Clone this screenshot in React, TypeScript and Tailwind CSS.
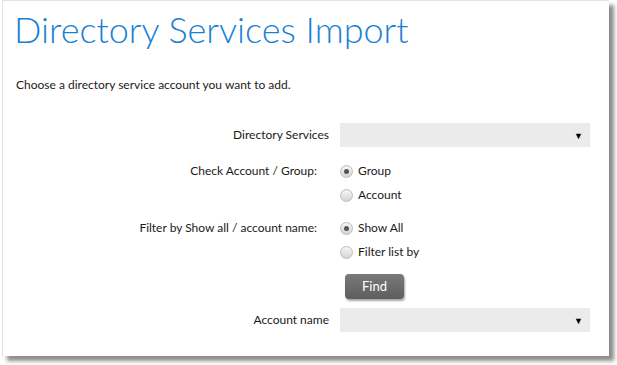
import React from 'react';

// Simple radio bullet, drawn with CSS
const Radio: React.FC<{ checked?: boolean; label: string }> = ({ checked, label }) => (
  <label className="flex h-[24px] items-center gap-[5px]">
    <span className="flex h-[13px] w-[13px] items-center justify-center rounded-full border border-[#bdbdbd] bg-gradient-to-b from-[#f6f6f6] to-[#d4d4d4]">
      {checked && <span className="h-[5px] w-[5px] rounded-full bg-[#555555]" />}
    </span>
    <span>{label}</span>
  </label>
);

const Select: React.FC = () => (
  <div className="flex h-[24px] w-[250px] items-center justify-end bg-[#ebebeb] pr-[7px]">
    <span className="text-[9px] leading-none text-black">▼</span>
  </div>
);

export default function App() {
  return (
    <div className="h-[365px] w-[617px] bg-white font-['Lato','Liberation_Sans',sans-serif] text-[12px] text-[#1a1a1a]">
      <div className="ml-[2px] h-[356px] w-[607px] border-t border-l border-[#e2e2e2] bg-white pl-[11px] shadow-[5px_5px_4px_rgba(0,0,0,0.45)]">
        <h1 className="pt-[6px] text-[36px] font-light leading-[44px] text-[#1a80d4]">
          Directory Services Import
        </h1>
        <p className="mt-[26px] pl-[2px] leading-[16px]">Choose a directory service account you want to add.</p>

        <div className="mt-[30px] grid grid-cols-[315px_250px] gap-x-[11px]">
          <div className="flex h-[24px] items-center justify-end">Directory Services</div>
          <Select />

          <div className="mt-[12px] flex h-[24px] items-center justify-end self-start pr-[12px]">Check Account / Group:</div>
          <div className="mt-[12px] flex flex-col">
            <Radio checked label="Group" />
            <Radio label="Account" />
          </div>

          <div className="mt-[9px] flex h-[24px] items-center justify-end self-start pr-[12px]">Filter by Show all / account name:</div>
          <div className="mt-[9px] flex flex-col">
            <Radio checked label="Show All" />
            <Radio label="Filter list by" />
          </div>

          <div />
          <div className="mt-[10px] pl-[5px]">
            <button className="h-[25px] w-[59px] rounded-[4px] bg-gradient-to-b from-[#7a7a7a] to-[#5e5e5e] text-[13px] text-white shadow-[1px_2px_2px_rgba(0,0,0,0.35)]">
              Find
            </button>
          </div>

          <div className="mt-[9px] flex h-[24px] items-center justify-end">Account name</div>
          <div className="mt-[9px]">
            <Select />
          </div>
        </div>
      </div>
    </div>
  );
}
